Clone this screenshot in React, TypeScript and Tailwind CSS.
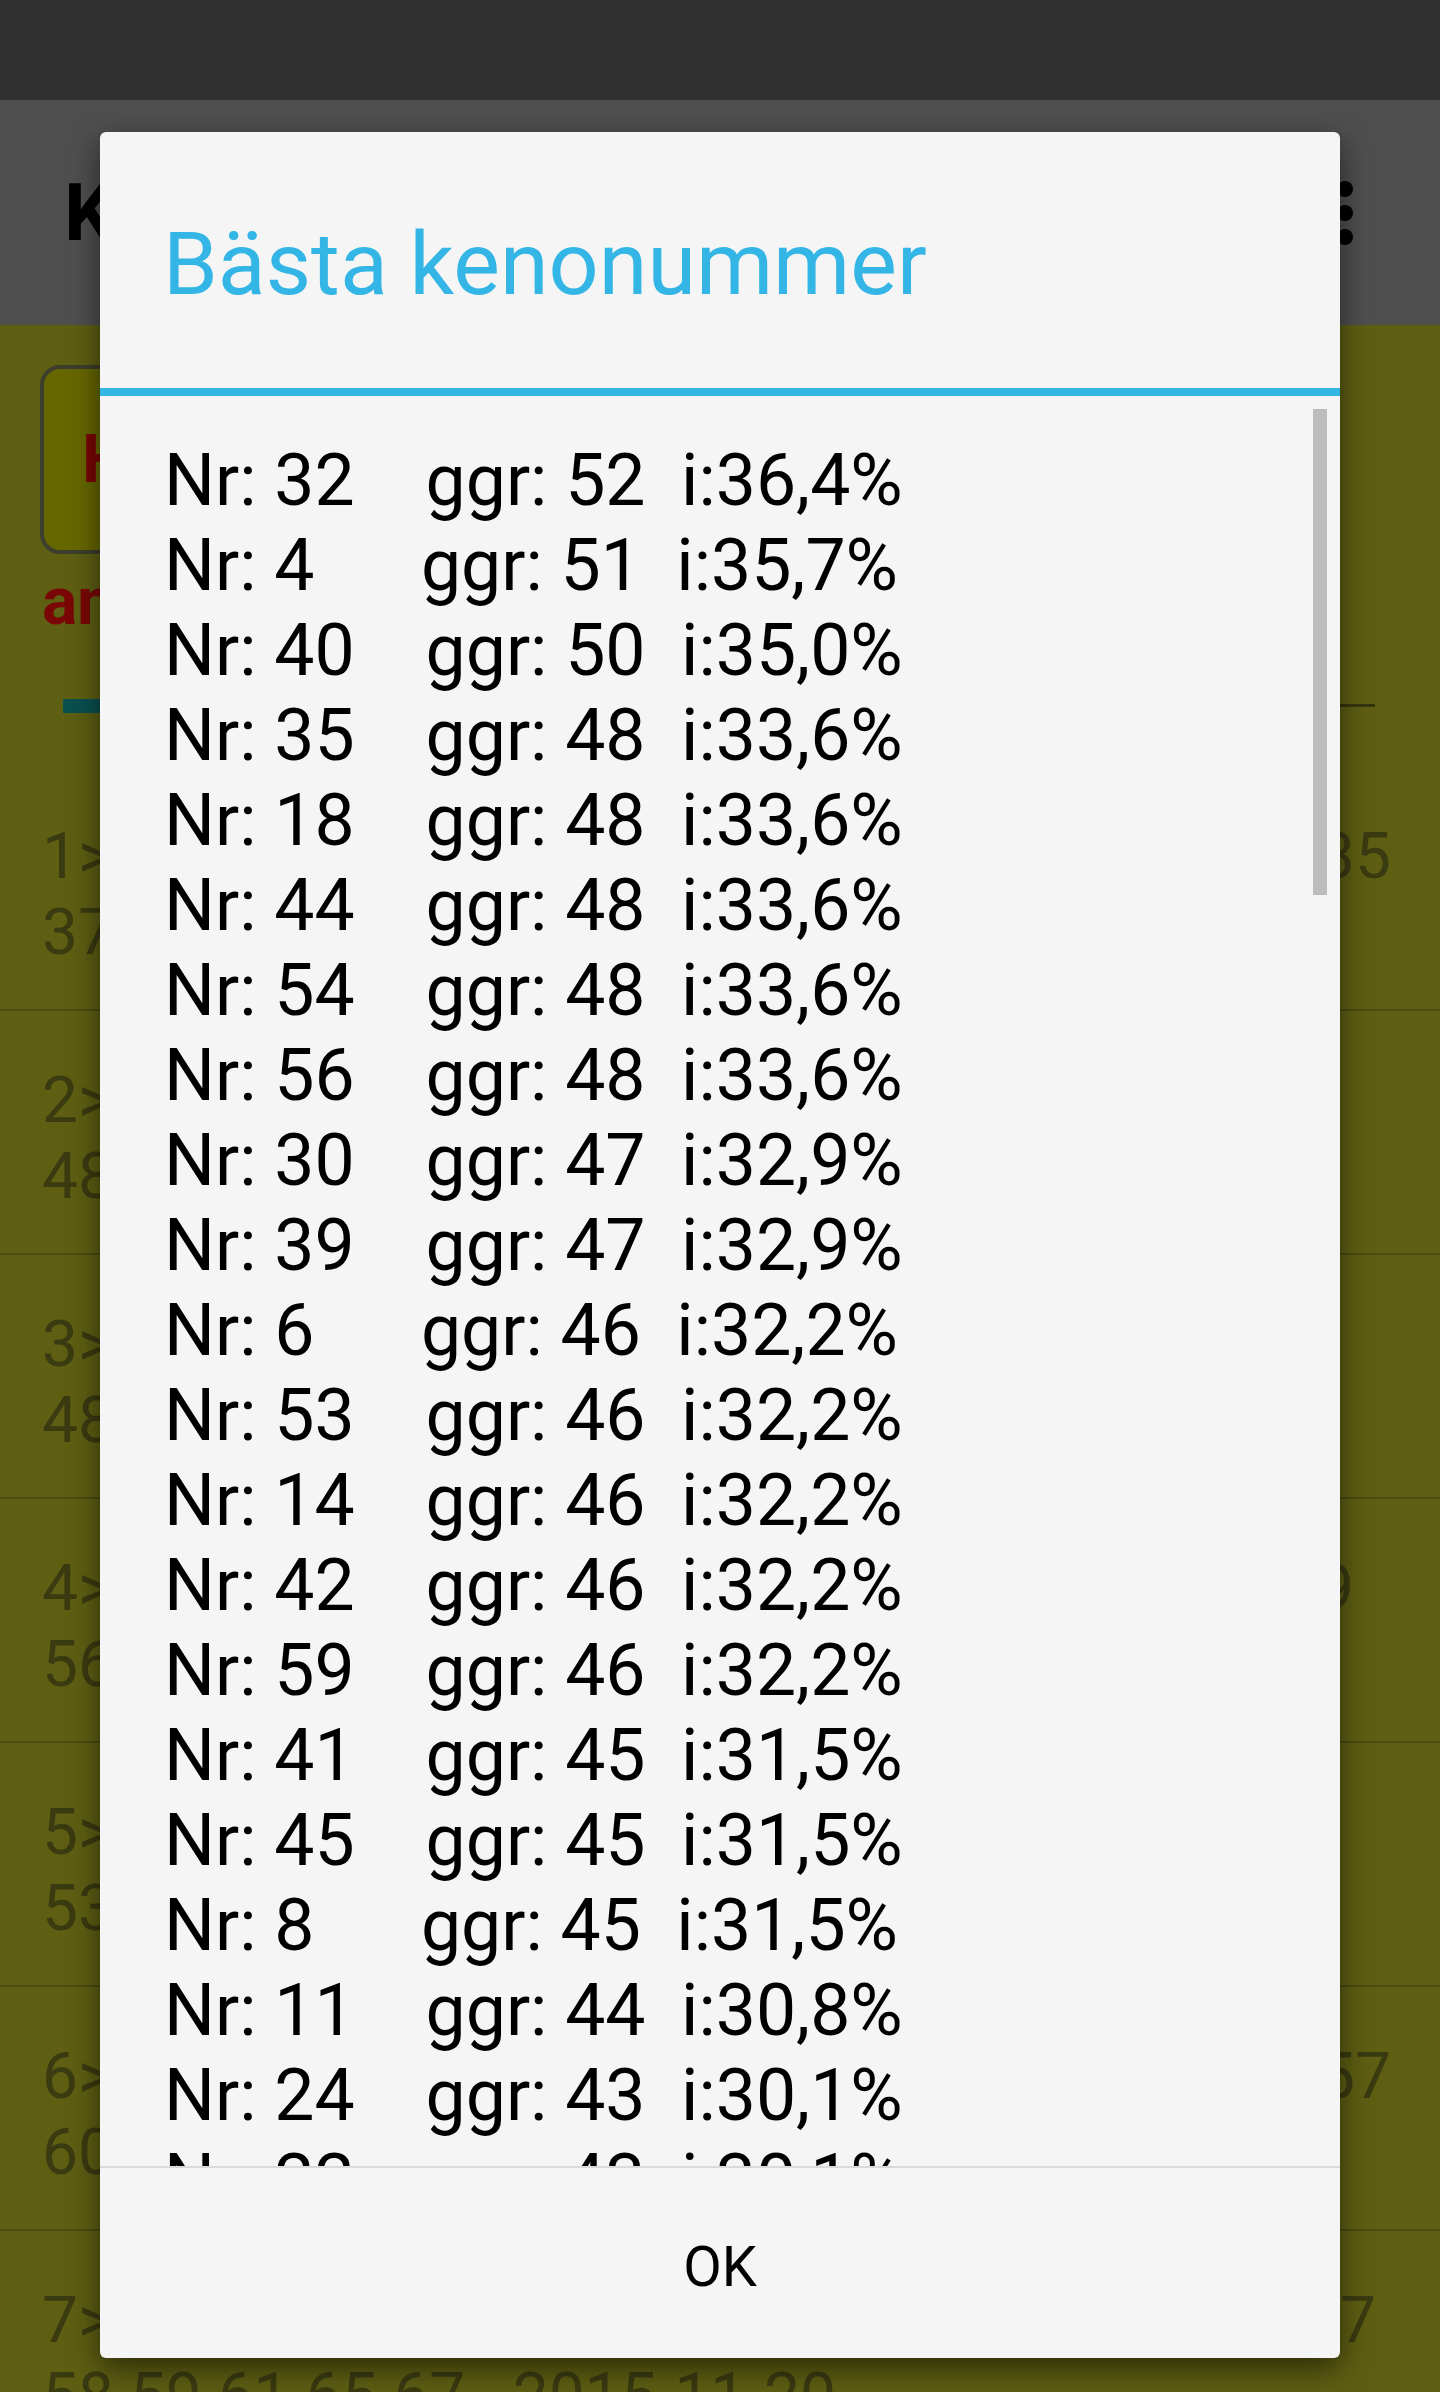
import React from "react";

const stats: [string, string, string][] = [
  ["32", "52", "36,4"],
  ["4", "51", "35,7"],
  ["40", "50", "35,0"],
  ["35", "48", "33,6"],
  ["18", "48", "33,6"],
  ["44", "48", "33,6"],
  ["54", "48", "33,6"],
  ["56", "48", "33,6"],
  ["30", "47", "32,9"],
  ["39", "47", "32,9"],
  ["6", "46", "32,2"],
  ["53", "46", "32,2"],
  ["14", "46", "32,2"],
  ["42", "46", "32,2"],
  ["59", "46", "32,2"],
  ["41", "45", "31,5"],
  ["45", "45", "31,5"],
  ["8", "45", "31,5"],
  ["11", "44", "30,8"],
  ["24", "43", "30,1"],
  ["22", "43", "30,1"],
];

// rader i bakgrunden (dolda till största delen av dialogen)
const draws: { a: string; b: string; pr: string }[] = [
  { a: "1> 02 06 11 15 19 23 27 33 35", b: "37 42 48 52 55 61 63 69   2015-11-26", pr: "pr-[49px]" },
  { a: "2> 04 09 12 18 25 31 38 44", b: "48 50 53 58 62 66 68 70   2015-11-25", pr: "pr-[300px]" },
  { a: "3> 01 07 13 17 21 29 36 41", b: "48 51 54 57 60 64 67 70   2015-11-24", pr: "pr-[300px]" },
  { a: "4> 03 08 14 20 26 32 40 46 59", b: "56 60 62 63 65 66 68 69   2015-11-23", pr: "pr-[86px]" },
  { a: "5> 05 10 16 22 28 34 39 45", b: "53 55 58 61 64 66 67 70   2015-11-22", pr: "pr-[300px]" },
  { a: "6> 02 07 12 19 24 30 37 43 57", b: "60 61 62 64 65 67 68 70   2015-11-21", pr: "pr-[49px]" },
  { a: "7> 04 09 15 21 27 33 39 44 47", b: "58 59 61 65 67   2015-11-20", pr: "pr-[64px]" },
];

function row(nr: string, ggr: string, pct: string) {
  const gap = nr.length === 1 ? "      " : "    ";
  return `Nr: ${nr}${gap}ggr: ${ggr}  i:${pct}%`;
}

export default function App() {
  return (
    <div className="relative w-[1440px] h-[2392px] overflow-hidden bg-[#5e5f13] font-[Roboto,sans-serif]">
      {/* statusfält */}
      <div className="h-[100px] bg-[#303030]" />

      {/* verktygsfält */}
      <div className="h-[225px] bg-[#4f4f4f] flex items-center justify-between pl-[64px] pr-[87px]">
        <span className="text-[80px] font-bold text-black leading-none">Kenostatistik</span>
        <div className="flex flex-col gap-[8px]">
          <span className="w-[16px] h-[16px] rounded-full bg-black" />
          <span className="w-[16px] h-[16px] rounded-full bg-black" />
          <span className="w-[16px] h-[16px] rounded-full bg-black" />
        </div>
      </div>

      {/* innehåll */}
      <div className="pt-[40px]">
        <div className="ml-[40px] h-[189px] w-[900px] rounded-[20px] border-[4px] border-[#3e3e2c] bg-[#676700] flex items-center pl-[38px]">
          <span className="text-[66px] font-bold text-[#7a0606] leading-none">Hämta senaste dragningar</span>
        </div>
        <div className="mt-[8px] pl-[42px] h-[80px] text-[66px] leading-[80px] font-bold text-[#7a0606]">
          antal dragningar: 143
        </div>
        <div className="mt-[57px] relative h-[14px] mx-[63px] w-[1312px]">
          <div className="absolute left-0 top-[5px] h-[3px] w-full bg-[#36360e]" />
          <div className="absolute left-0 top-0 h-[14px] w-[400px] bg-[#0a5050]" />
        </div>

        <div className="mt-[54px]">
          {draws.map((d, i) => (
            <div key={i} className="h-[244px] border-b-[2px] border-[#4b4c0f] pt-[52px] text-[64px] leading-[76px] text-[#3a3b11]">
              <p className={`pl-[42px] ${d.pr} text-justify [text-align-last:justify]`}>{d.a}</p>
              <p className="pl-[42px] whitespace-pre">{d.b}</p>
            </div>
          ))}
        </div>
      </div>

      {/* dialog */}
      <div className="absolute left-[100px] top-[132px] w-[1240px] h-[2226px] bg-[#f5f5f5] rounded-[6px] shadow-[0_10px_30px_rgba(0,0,0,0.55)] flex flex-col overflow-hidden">
        <div className="h-[256px] flex items-center pl-[63px] pt-[8px]">
          <span className="text-[88px] leading-none text-[#33b5e5]">Bästa kenonummer</span>
        </div>
        <div className="h-[8px] bg-[#33b5e5]" />
        <div className="relative h-[1770px] overflow-hidden pt-[42px] pl-[64px]">
          {stats.map((s, i) => (
            <div key={i} className="whitespace-pre text-[71.5px] leading-[85px] text-black">
              {row(s[0], s[1], s[2])}
            </div>
          ))}
          <div className="absolute right-[13px] top-[13px] w-[14px] h-[486px] bg-[#bdbdbd]" />
        </div>
        <div className="h-[2px] bg-[#dadada]" />
        <div className="flex-1 flex items-center justify-center pt-[8px]">
          <span className="text-[56px] leading-none text-black">OK</span>
        </div>
      </div>
    </div>
  );
}
